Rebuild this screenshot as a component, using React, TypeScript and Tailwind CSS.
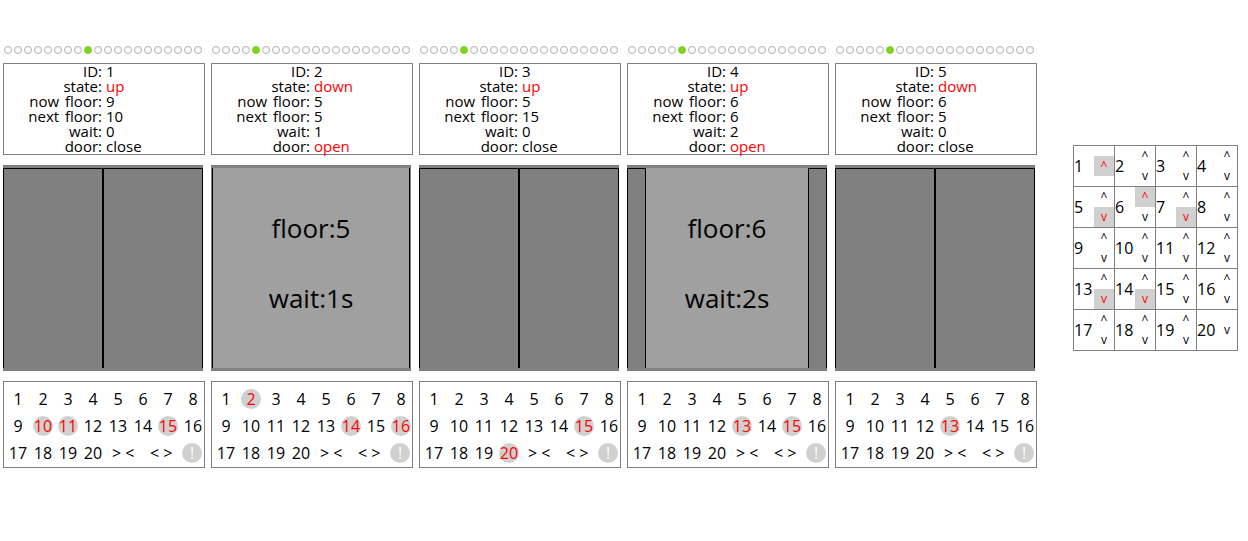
import { clsx } from 'clsx'

type Elevator = {
  id: number
  state: 'up' | 'down'
  now: number
  next: number
  wait: number
  door: 'open' | 'close'
  doorW: number
  calls: number[]
}

const ELEVATORS: Elevator[] = [
  { id: 1, state: 'up', now: 9, next: 10, wait: 0, door: 'close', doorW: 100, calls: [10, 11, 15] },
  { id: 2, state: 'down', now: 5, next: 5, wait: 1, door: 'open', doorW: 2, calls: [2, 14, 16] },
  { id: 3, state: 'up', now: 5, next: 15, wait: 0, door: 'close', doorW: 100, calls: [15, 20] },
  { id: 4, state: 'up', now: 6, next: 6, wait: 2, door: 'open', doorW: 19, calls: [13, 15] },
  { id: 5, state: 'down', now: 6, next: 5, wait: 0, door: 'close', doorW: 100, calls: [13] },
]

const UP_CALLS = [1, 6]
const DOWN_CALLS = [5, 7, 13, 14]

const FLOORS = Array.from({ length: 20 }, (_, i) => i + 1)

function FloorDots({ now }: { now: number }) {
  return (
    <div className="flex gap-[2px] pl-[1px] h-[8px]">
      {FLOORS.map((f) => (
        <div
          key={f}
          className={clsx(
            'w-[8px] h-[8px] rounded-full border',
            f === now ? 'bg-[#7ed321] border-[#7ed321]' : 'bg-white border-[#b0b0b0]'
          )}
        />
      ))}
    </div>
  )
}

function InfoRow({ label, value, red }: { label: string; value: string | number; red?: boolean }) {
  return (
    <>
      <div className="text-right whitespace-nowrap pr-[2px] [word-spacing:2px]">{label}:</div>
      <div className={clsx('text-left pl-[2px]', red && 'text-[#ff0000]')}>{value}</div>
    </>
  )
}

function Info({ e }: { e: Elevator }) {
  return (
    <div className="mt-[9px] h-[92px] border border-[#808080] grid grid-cols-2 text-[15px] leading-[15px] text-black content-start">
      <InfoRow label="ID" value={e.id} />
      <InfoRow label="state" value={e.state} red />
      <InfoRow label="now floor" value={e.now} />
      <InfoRow label="next floor" value={e.next} />
      <InfoRow label="wait" value={e.wait} />
      <InfoRow label="door" value={e.door} red={e.door === 'open'} />
    </div>
  )
}

function Shaft({ e }: { e: Elevator }) {
  const closed = e.doorW >= 100
  const thin = e.doorW <= 2
  return (
    <div className="mt-[10px] w-[200px] h-[206px] border-y-[3px] border-[#808080] bg-[#a0a0a0] flex relative">
      <div
        className={clsx('h-full bg-[#808080] border-r border-black', !thin && 'border-l border-t')}
        style={{ width: e.doorW }}
      />
      <div className="flex-1" />
      <div
        className={clsx('h-full bg-[#808080] border-l border-black', !thin && 'border-r border-t')}
        style={{ width: e.doorW }}
      />
      {!closed && (
        <div className="absolute inset-0 flex flex-col items-center pt-[43px] gap-[36px] text-[26px] leading-[34px] text-black">
          <div>floor:{e.now}</div>
          <div>wait:{e.wait}s</div>
        </div>
      )}
    </div>
  )
}

function CallButton({ n, on }: { n: number; on: boolean }) {
  return (
    <div
      className={clsx(
        'w-[20px] h-[20px] rounded-full flex items-center justify-center',
        on ? 'bg-[#d0d0d0] text-[#ff0000]' : 'text-black'
      )}
    >
      {n}
    </div>
  )
}

function Panel({ e }: { e: Elevator }) {
  const row = (from: number) => FLOORS.slice(from, from + 8)
  return (
    <div className="mt-[10px] h-[87px] border border-[#808080] pt-[7px] pl-[4px] flex flex-col gap-[7px] text-[16px] leading-[20px]">
      {[0, 8].map((start) => (
        <div key={start} className="flex gap-[5px]">
          {row(start).map((n) => (
            <CallButton key={n} n={n} on={e.calls.includes(n)} />
          ))}
        </div>
      ))}
      <div className="flex items-center">
        <div className="flex gap-[5px]">
          {FLOORS.slice(16).map((n) => (
            <CallButton key={n} n={n} on={e.calls.includes(n)} />
          ))}
        </div>
        <div className="ml-[9px] w-[22px] text-center text-[16px] whitespace-pre">{'> <'}</div>
        <div className="ml-[16px] w-[22px] text-center text-[16px] whitespace-pre">{'< >'}</div>
        <div className="ml-[10px] w-[20px] h-[20px] rounded-full bg-[#d0d0d0] text-white flex items-center justify-center text-[16px]">
          !
        </div>
      </div>
    </div>
  )
}

function HallCell({ n }: { n: number }) {
  const upOn = UP_CALLS.includes(n)
  const downOn = DOWN_CALLS.includes(n)
  return (
    <div className="w-[41px] h-[41px] border-r border-b border-[#808080] flex items-center justify-between">
      <span className="text-[16px] leading-[20px]">{n}</span>
      <div className="w-[20px] flex flex-col justify-center text-[12px] leading-[20px]">
        {n < 20 && (
          <div className={clsx('h-[20px] text-center', upOn && 'bg-[#d0d0d0] text-[#ff0000]')}>^</div>
        )}
        {n > 1 && (
          <div className={clsx('h-[20px] text-center', downOn && 'bg-[#d0d0d0] text-[#ff0000]')}>v</div>
        )}
      </div>
    </div>
  )
}

export default function App() {
  return (
    <div
      className="w-[1248px] h-[541px] bg-white text-black pt-[46px] pl-[3px] flex"
      style={{ fontFamily: '"Open Sans", "Noto Sans", sans-serif' }}
    >
      <div className="flex gap-[6px]">
        {ELEVATORS.map((e) => (
          <div key={e.id} className="w-[202px] flex flex-col">
            <FloorDots now={e.now} />
            <Info e={e} />
            <Shaft e={e} />
            <Panel e={e} />
          </div>
        ))}
      </div>
      <div className="ml-[36px] mt-[99px] self-start grid grid-cols-4 border-l border-t border-[#808080]">
        {FLOORS.map((n) => (
          <HallCell key={n} n={n} />
        ))}
      </div>
    </div>
  )
}
